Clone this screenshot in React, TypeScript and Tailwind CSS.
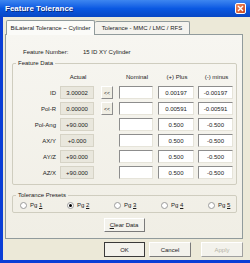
import React from "react";

const ROWS = [
  { label: "ID", actual: "3.00002", copy: true, plus: "0.00197", minus: "-0.00197" },
  { label: "Pol-R", actual: "0.00000", copy: true, plus: "0.00591", minus: "-0.00591" },
  { label: "Pol-Ang", actual: "+90.000", copy: false, plus: "0.500", minus: "-0.500" },
  { label: "AX/Y", actual: "+0.000", copy: false, plus: "0.500", minus: "-0.500" },
  { label: "AY/Z", actual: "+90.000", copy: false, plus: "0.500", minus: "-0.500" },
  { label: "AZ/X", actual: "+90.000", copy: false, plus: "0.500", minus: "-0.500" },
];

const PAGES = ["1", "2", "3", "4", "5"];

const sunken =
  "h-[13px] bg-white border border-t-[#8d8d8d] border-l-[#8d8d8d] border-b-[#e6e4da] border-r-[#e6e4da] flex items-center justify-center";

function Radio({ page, checked }: { page: string; checked: boolean }) {
  return (
    <div className={`flex items-center gap-[3px] ${page === "5" ? "" : "w-[47px]"}`}>
      <span className="w-[7px] h-[7px] rounded-full bg-white border border-[#9b9b9b] flex items-center justify-center">
        {checked && <span className="w-[3px] h-[3px] rounded-full bg-black" />}
      </span>
      <span>
        Pg <span className="underline">{page}</span>
      </span>
    </div>
  );
}

export default function App() {
  return (
    <div
      className="w-[250px] h-[263px] overflow-hidden bg-[#0a3ed6] flex flex-col text-[6px] leading-[8px] text-[#1a1a1a]"
      style={{ fontFamily: '"Liberation Sans", Arial, sans-serif' }}
    >
      {/* title bar */}
      <div className="h-[17px] shrink-0 flex items-center justify-between pl-[5px] pr-[4px] bg-gradient-to-b from-[#3d86f0] via-[#0a58e2] to-[#0847c4]">
        <span className="text-white font-bold text-[8px] leading-[10px] [text-shadow:1px_1px_0_#0a2a7a]">
          Feature Tolerance
        </span>
        <div className="w-[11px] h-[11px] rounded-[2px] border border-white bg-gradient-to-br from-[#f08a5d] to-[#c7421c] flex items-center justify-center">
          <svg width="7" height="7" viewBox="0 0 7 7">
            <path d="M1 1 L6 6 M6 1 L1 6" stroke="white" strokeWidth="1.4" />
          </svg>
        </div>
      </div>

      {/* body */}
      <div className="flex-1 ml-[3px] mb-[3px] bg-[#ece9d8] flex flex-col">
        {/* tabs */}
        <div className="flex items-end pl-[3px] pt-[2px] h-[17px]">
          <div className="h-[15px] w-[89px] bg-[#fbfbf8] border border-b-0 border-[#919b9c] rounded-t-[2px] flex items-center justify-center -mb-px relative z-10">
            BiLateral Tolerance ~ Cylinder
          </div>
          <div className="h-[13px] w-[95px] bg-[#f4f3ee] border border-b-0 border-l-0 border-[#919b9c] rounded-t-[2px] flex items-center justify-center">
            Tolerance - MMC / LMC / RFS
          </div>
        </div>

        {/* panel */}
        <div className="ml-[2px] w-[238px] h-[205px] border border-[#919b9c] bg-gradient-to-b from-[#f7f6f1] to-[#f0eee5] flex flex-col pt-[13px]">
          <div className="flex pl-[17px]">
            <span className="w-[60px]">Feature Number:</span>
            <span>15 ID XY Cylinder</span>
          </div>

          <fieldset className="ml-[6px] w-[225px] min-w-0 mt-[3px] border border-[#cfcdbf] rounded-[2px] pb-[5px]">
            <legend className="ml-[3px] px-[2px]">Feature Data</legend>
            <div className="flex mt-[6px] h-[8px]">
              <span className="ml-[48px] w-[34px] text-center">Actual</span>
              <span className="ml-[25px] w-[34px] text-center">Nominal</span>
              <span className="ml-[5px] w-[36px] text-center">(+) Plus</span>
              <span className="ml-[4px] w-[35px] text-center">(-) minus</span>
            </div>
            <div className="flex flex-col gap-[3px] mt-[5px]">
              {ROWS.map((r) => (
                <div key={r.label} className="flex items-center h-[13px]">
                  <span className="w-[43px] text-right">{r.label}</span>
                  <div className="ml-[4px] w-[34px] h-[13px] bg-[#e9e7dd] border border-[#d6d3c6] flex items-center justify-center">
                    {r.actual}
                  </div>
                  <div className="ml-[7px] w-[12px] h-[13px]">
                    {r.copy && (
                      <div className="w-[12px] h-[13px] bg-[#f0eee4] border border-t-white border-l-white border-b-[#8d8d8d] border-r-[#8d8d8d] flex items-center justify-center text-[5px]">
                        &lt;&lt;
                      </div>
                    )}
                  </div>
                  <div className={`ml-[6px] w-[34px] ${sunken}`} />
                  <div className={`ml-[5px] w-[36px] ${sunken}`}>{r.plus}</div>
                  <div className={`ml-[4px] w-[35px] ${sunken}`}>{r.minus}</div>
                </div>
              ))}
            </div>
          </fieldset>

          <fieldset className="ml-[6px] w-[225px] min-w-0 mt-[6px] border border-[#cfcdbf] rounded-[2px] pb-[3px]">
            <legend className="ml-[3px] px-[2px]">Tolerance Presets</legend>
            <div className="flex mt-[2px] pl-[7px]">
              {PAGES.map((p) => (
                <Radio key={p} page={p} checked={p === "2"} />
              ))}
            </div>
          </fieldset>

          <div className="flex justify-center mt-[5px]">
            <div className="w-[41px] h-[14px] bg-[#f3f2ec] border border-t-white border-l-white border-b-[#7a7a7a] border-r-[#7a7a7a] flex items-center justify-center">
              <span>
                <span className="underline">C</span>lear Data
              </span>
            </div>
          </div>
        </div>

        {/* dialog buttons */}
        <div className="flex mt-[3px] pl-[101px] gap-[4px]">
          <div className="w-[41px] h-[15px] bg-[#f3f2ec] border border-[#3a3a3a] flex items-center justify-center">
            OK
          </div>
          <div className="w-[42px] h-[15px] bg-[#f3f2ec] border border-t-white border-l-white border-b-[#7a7a7a] border-r-[#7a7a7a] flex items-center justify-center">
            Cancel
          </div>
          <div className="ml-[6px] w-[42px] h-[15px] bg-[#f3f2ec] border border-t-white border-l-white border-b-[#a0a0a0] border-r-[#a0a0a0] flex items-center justify-center text-[#b5b2a6]">
            Apply
          </div>
        </div>
      </div>
    </div>
  );
}
